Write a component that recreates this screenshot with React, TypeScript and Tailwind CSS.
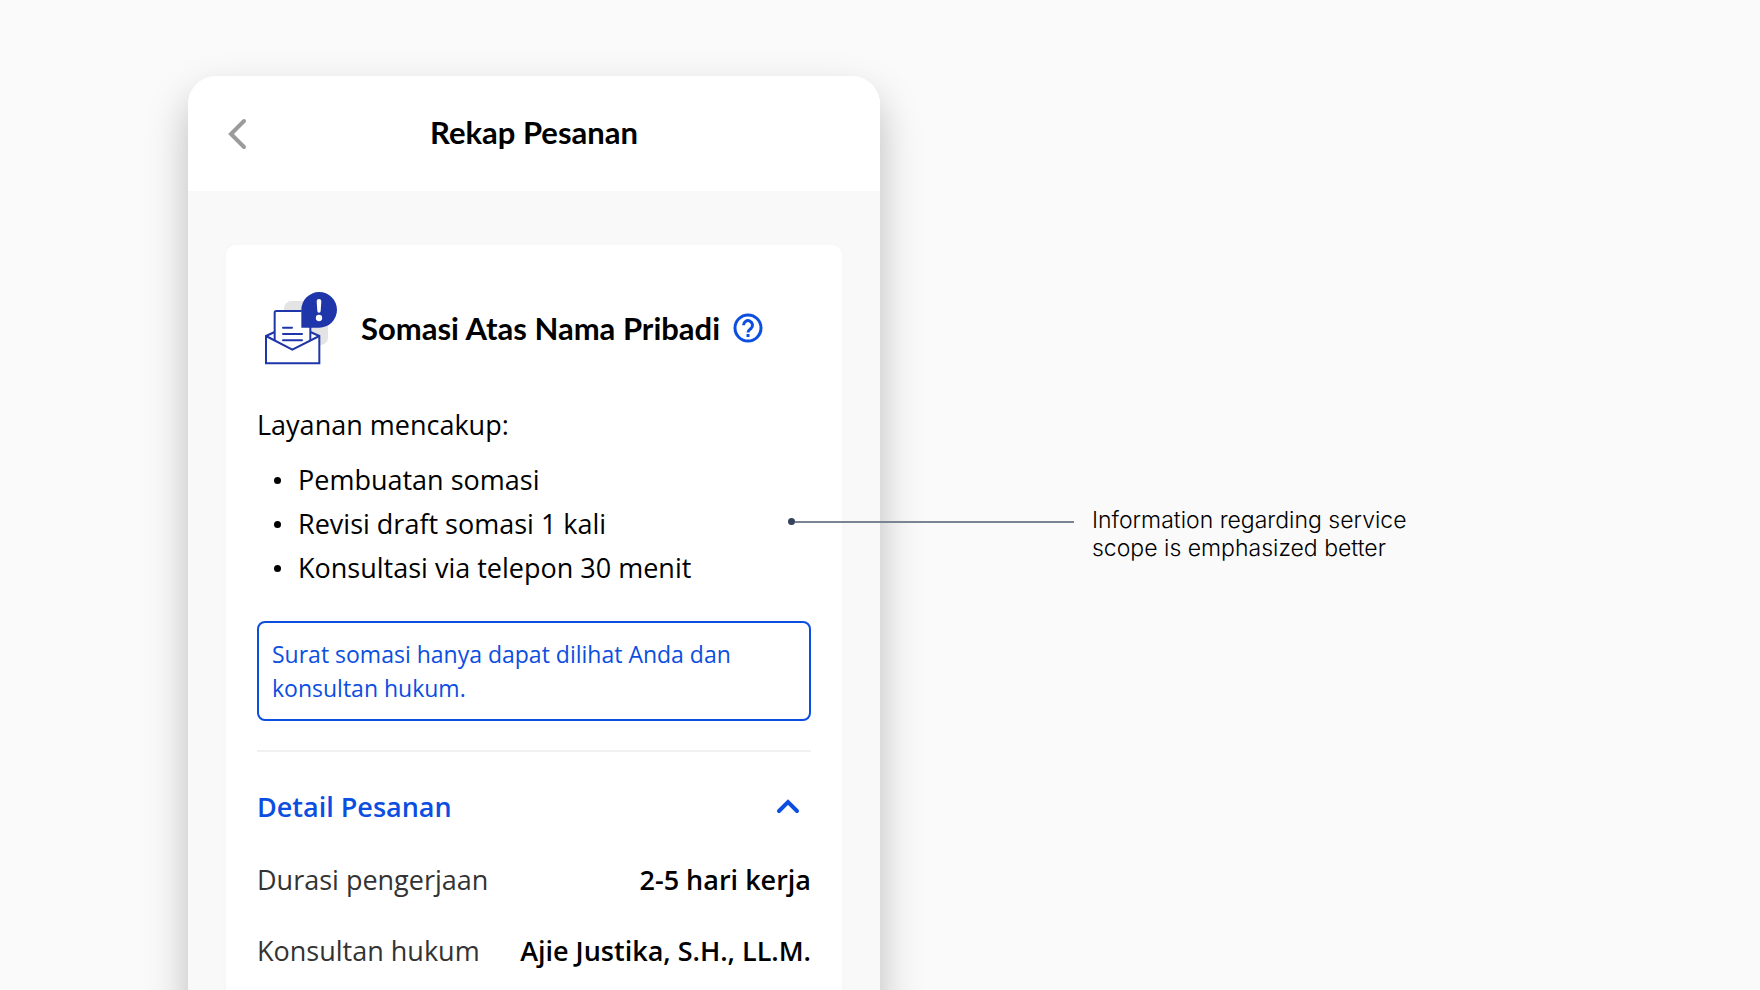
import { useState } from "react";

const services = [
  "Pembuatan somasi",
  "Revisi draft somasi 1 kali",
  "Konsultasi via telepon 30 menit",
];

const details = [
  { label: "Durasi pengerjaan", value: "2-5 hari kerja" },
  { label: "Konsultan hukum", value: "Ajie Justika, S.H., LL.M." },
];

function SomasiIcon() {
  return (
    <svg viewBox="72 63 222 222" className="size-[74px] shrink-0" fill="none" aria-hidden="true">
      <rect x="132" y="93" width="132" height="132" rx="22" fill="#e4e4e4" />
      <path d="M78 197 104 186h107l27 11v84H78z" fill="#fff" />
      <path
        d="M104 212v-84a5 5 0 0 1 5-5h102v89l-54 27z"
        fill="#fff"
      />
      <g stroke="#1e36a9" strokeWidth="6">
        <path d="M104 212v-84a5 5 0 0 1 5-5h76M211 170v42" />
        <path d="M104 186 78 198v82h160v-82l-27-12" />
        <path d="m78 198 79 41 81-41" />
        <path d="M129 173h27M129 192h57M129 211h57" strokeLinecap="round" />
      </g>
      <path d="M184 173v-53a53.500 53.500 0 1 1 53.500 53z" fill="#1e36a9" />
      <path d="M230 94a7 7 0 0 1 14 0l-2 29a5 5 0 0 1-10 0z" fill="#fff" />
      <circle cx="237" cy="144" r="9.500" fill="#fff" />
    </svg>
  );
}

function Header() {
  return (
    <header className="grid h-[115px] grid-cols-[60px_1fr_60px] items-center rounded-t-[28px] bg-white px-5">
      <button type="button" aria-label="Kembali" className="flex h-12 items-center justify-center">
        <svg viewBox="0 0 20 32" className="h-8 w-5" fill="none" stroke="#9b9b9b" strokeWidth="4" strokeLinecap="round">
          <path d="M16 3 3 16l13 13" />
        </svg>
      </button>
      <h1 className="pb-1 text-center font-['Lato',sans-serif] text-[31px] leading-10 font-bold">Rekap Pesanan</h1>
    </header>
  );
}

function OrderCard() {
  const [open, setOpen] = useState(true);

  return (
    <section className="min-h-screen rounded-t-[10px] bg-white px-[31px] pt-[46px] text-[27px] leading-[44px] shadow-[0_0_8px_rgba(0,0,0,0.02)]">
      <div className="flex items-center pl-[7px]">
        <SomasiIcon />
        <h2 className="ml-[23px] font-['Lato',sans-serif] text-[31px] leading-10 font-bold">
          Somasi Atas Nama Pribadi
        </h2>
        <button type="button" aria-label="Bantuan" className="ml-[13px] size-[30px] shrink-0">
          <svg viewBox="0 0 30 30" fill="none" stroke="#0b4ee0" strokeWidth="3">
            <circle cx="15" cy="15" r="13" />
            <path d="M10.500 12.200a4.500 4.500 0 1 1 7.500 3.300c-1.700 1.400-3 2-3 4" />
            <path d="M15 21v3" />
          </svg>
        </button>
      </div>

      <p className="mt-[38px]">Layanan mencakup:</p>
      <ul className="mt-[11px]">
        {services.map((service) => (
          <li key={service} className="flex items-center gap-4 pl-4">
            <span className="mx-px size-[7px] rounded-full bg-black" />
            {service}
          </li>
        ))}
      </ul>

      <p className="mt-[31px] rounded-lg border-2 border-[#0b4ee0] px-[13px] py-[14px] text-[23px] leading-[34px] text-[#0b4ee0]">
        Surat somasi hanya dapat dilihat Anda dan konsultan hukum.
      </p>

      <hr className="mt-[29px] border-t-2 border-[#f1f1f1]" />

      <button
        type="button"
        aria-expanded={open}
        onClick={() => setOpen(!open)}
        className="mt-[33px] flex w-full items-center justify-between pr-[11px] font-semibold text-[#0b4ee0]"
      >
        Detail Pesanan
        <svg viewBox="0 0 24 16" className="h-4 w-6" fill="none" stroke="currentColor" strokeWidth="4" strokeLinecap="round">
          <path d="m3 12 9-9 9 9" />
        </svg>
      </button>

      {open && (
        <dl className="mt-[29px] flex flex-col gap-[27px]">
          {details.map((row) => (
            <div key={row.label} className="flex justify-between">
              <dt className="text-[#333333]">{row.label}</dt>
              <dd className="font-semibold">{row.value}</dd>
            </div>
          ))}
        </dl>
      )}
    </section>
  );
}

function Annotation() {
  return (
    <aside className="relative mt-[506px] -ml-[92px] flex items-start">
      <div className="mt-3 flex items-center">
        <span className="size-[7px] rounded-full bg-[#35425b]" />
        <span className="h-[2px] w-[279px] bg-[#7b8495]" />
      </div>
      <p className="ml-[18px] font-['Inter',sans-serif] text-[23px] leading-7 font-light">
        Information regarding service
        <br />
        scope is emphasized better
      </p>
    </aside>
  );
}

export default function App() {
  return (
    <div className="flex h-screen items-start overflow-hidden bg-[#fafafa] pl-[188px] font-['Open_Sans',sans-serif] text-black">
      <main className="mt-[76px] w-full max-w-[692px] rounded-t-[28px] bg-[#f9f9f9] shadow-[0_20px_40px_rgba(0,0,0,0.25)]">
        <Header />
        <div className="px-[38px] pt-[54px]">
          <OrderCard />
        </div>
      </main>
      <Annotation />
    </div>
  );
}
